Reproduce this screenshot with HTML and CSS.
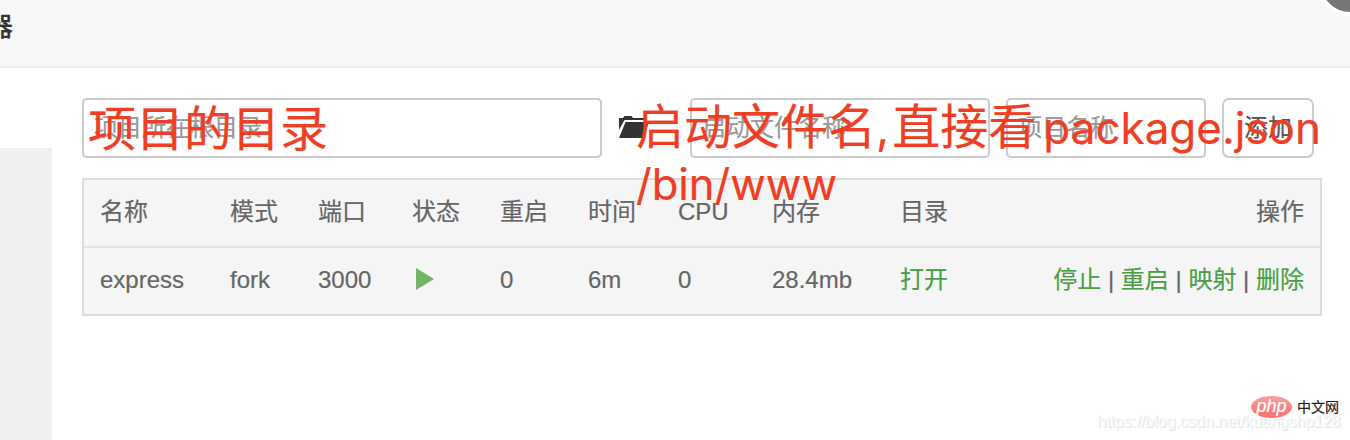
FILE: index.html
```
<!DOCTYPE html>
<html lang="zh-CN">
<head>
<meta charset="utf-8">
<title>项目管理器</title>
<link rel="stylesheet" href="styles.css">
</head>
<body>
<header class="topbar"><h1 class="title">器</h1><span class="close"></span></header>
<div class="layout">
  <aside class="sidebar"></aside>
  <main class="content">
    <form class="toolbar">
      <input class="field field-path" type="text" placeholder="项目所在根目录">
      <svg class="folder" width="34" height="24" viewBox="0 0 34 24"><path d="M1 14V2h4l1.500-2h7L15 2h11v2H6.500z"/><path d="M7.500 6H31l-5.500 16H1z"/></svg>
      <input class="field field-file" type="text" placeholder="启动文件名称">
      <input class="field field-name" type="text" placeholder="项目名称">
      <button class="add" type="button">添加</button>
    </form>
    <table class="projects">
      <colgroup><col class="c1"><col class="c2"><col class="c3"><col class="c4"><col class="c5"><col class="c6"><col class="c7"><col class="c8"><col class="c9"><col></colgroup>
      <thead>
        <tr><th>名称</th><th>模式</th><th>端口</th><th>状态</th><th>重启</th><th>时间</th><th>CPU</th><th>内存</th><th>目录</th><th class="actions">操作</th></tr>
      </thead>
      <tbody>
        <tr><td>express</td><td>fork</td><td>3000</td><td><svg class="play" width="18" height="22" viewBox="0 0 18 22"><path d="M0 0v22l18-11z"/></svg></td><td>0</td><td>6m</td><td>0</td><td>28.4mb</td><td><a>打开</a></td><td class="actions"><a>停止</a> | <a>重启</a> | <a>映射</a> | <a>删除</a></td></tr>
      </tbody>
    </table>
  </main>
</div>
<div class="note note-dir">项目的目录</div>
<div class="note note-file">
  <div class="line">启动文件名<span class="comma">,</span>直接看<span class="pkg">package.json</span></div>
  <div class="line"><span class="bin">/bin/www</span></div>
</div>
<div class="brand"><span class="php">php</span><span class="site">中文网</span></div>
<div class="watermark">https://blog.csdn.net/kuangshp128</div>
</body>
</html>
```
FILE: styles.css
```
* { box-sizing: border-box; }
body {
  margin: 0;
  width: 1350px;
  height: 440px;
  position: relative;
  overflow: hidden;
  display: flex;
  flex-direction: column;
  background: #fff;
  color: #666;
  font: 24px/36px "Liberation Sans", "Noto Sans CJK SC", sans-serif;
  -webkit-text-stroke: 0.2px;
}
.topbar {
  position: relative;
  height: 68px;
  flex: none;
  background: #f7f7f7;
  border-bottom: 2px solid #eee;
}
.title {
  margin: 9px 0 0 -13px;
  font-size: 26px;
  line-height: 36px;
  font-weight: 500;
  color: #333;
}
.close {
  position: absolute;
  left: 1317px;
  top: -50px;
  width: 66px;
  height: 66px;
  border-radius: 50%;
  border: 4px solid #fff;
  background: #777;
}
.layout { display: flex; flex: 1; }
.sidebar { width: 52px; margin-top: 80px; background: #efefef; }
.content { margin-left: 30px; padding-top: 30px; width: 1240px; }
.toolbar { display: flex; margin: 0 0 20px; height: 60px; }
.field, .add {
  height: 60px;
  border: 2px solid #ccc;
  border-radius: 5px;
  background: #fff;
  font: inherit;
}
.field { padding: 0 10px; }
.field::placeholder { color: #999; opacity: 1; }
.field-path { width: 520px; }
.folder { margin: 18px 38px 0 16px; fill: #333; }
.field-file { width: 300px; margin-right: 16px; }
.field-name { width: 200px; margin-right: 16px; }
.add { width: 92px; padding: 0; border-radius: 7px; color: #555; }
.projects {
  width: 1240px;
  table-layout: fixed;
  border-spacing: 0;
  border: 2px solid #ddd;
  background: #f5f5f5;
}
.projects th, .projects td {
  padding: 0 16px;
  text-align: left;
  font-weight: 400;
  white-space: nowrap;
}
.projects th { height: 68px; padding-bottom: 2px; border-bottom: 2px solid #e4e4e4; }
.projects td { height: 66px; padding-bottom: 2px; }
.projects .actions { text-align: right; }
.projects a { color: #4ba046; }
.c1 { width: 130px; }
.c2 { width: 88px; }
.c3 { width: 94px; }
.c4, .c5 { width: 88px; }
.c6 { width: 90px; }
.c7 { width: 94px; }
.c8 { width: 128px; }
.c9 { width: 90px; }
.play { display: block; margin: -2px 0 0 4px; fill: #72b566; }
.note {
  position: absolute;
  color: #f03e25;
  font: 400 48px/56px "Noto Sans CJK SC", sans-serif;
  white-space: nowrap;
}
.line { height: 56px; }
.note-dir { left: 88px; top: 97px; }
.note-file { left: 636px; top: 95px; }
.note-file span { font-family: Inter, sans-serif; font-weight: 400; line-height: 1; }
.comma { font-size: 46px; margin-right: 3px; }
.pkg { font-size: 44px; margin-left: 7px; }
.bin { font-size: 43.5px; }
.brand {
  position: absolute;
  left: 1251px;
  top: 396px;
  display: flex;
  align-items: center;
  gap: 5px;
}
.php {
  width: 41px;
  height: 22px;
  border-radius: 50%;
  background: linear-gradient(#f9a09b, #f77070);
  color: #fff;
  font: italic 18px/20px "Liberation Sans", sans-serif;
  text-align: center;
}
.site { font: 14px/20px "Noto Sans CJK SC", sans-serif; color: #222; padding-bottom: 2px; }
.watermark {
  position: absolute;
  right: 9px;
  top: 412px;
  font: 16px/20px "Liberation Sans", sans-serif;
  color: #f9f9f9;
  text-shadow: 1px 1px 0 #e2e2e2;
}
```
